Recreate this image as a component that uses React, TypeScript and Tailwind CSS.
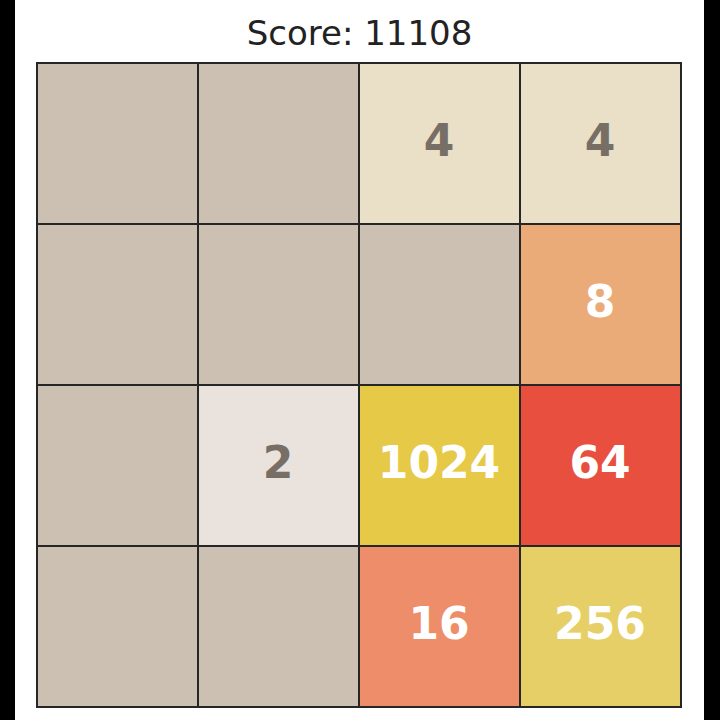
const tiles: (number | null)[] = [
  null, null, 4, 4,
  null, null, null, 8,
  null, 2, 1024, 64,
  null, null, 16, 256,
];

const tileStyle: Record<string, string> = {
  empty: 'bg-[#ccc0b3]',
  '2': 'bg-[#eae2dc] text-[#776e65]',
  '4': 'bg-[#eadfc7] text-[#776e65]',
  '8': 'bg-[#ebab78] text-white',
  '16': 'bg-[#ee8d69] text-white',
  '64': 'bg-[#e84f3f] text-white',
  '256': 'bg-[#e7cf67] text-white',
  '1024': 'bg-[#e6c946] text-white',
};

export default function App() {
  return (
    <div className="flex h-[720px] w-[720px] bg-black font-['DejaVu_Sans',sans-serif]">
      <div className="ml-[15px] flex w-[689px] flex-col items-center bg-white">
        {/* 分数 */}
        <div className="flex h-[62px] items-center pt-[3px] text-[34px] leading-none text-[#222]">
          Score: 11108
        </div>

        {/* 棋盘 */}
        <div className="-ml-[2px] grid grid-cols-4 gap-[2px] border-2 border-[#262626] bg-[#262626]">
          {tiles.map((v, i) => (
            <div
              key={i}
              className={`flex h-[159px] w-[159px] items-center justify-center pb-[5px] text-[44px] font-bold leading-none ${
                v === null ? tileStyle.empty : tileStyle[String(v)]
              }`}
            >
              {v ?? ''}
            </div>
          ))}
        </div>
      </div>
    </div>
  );
}
